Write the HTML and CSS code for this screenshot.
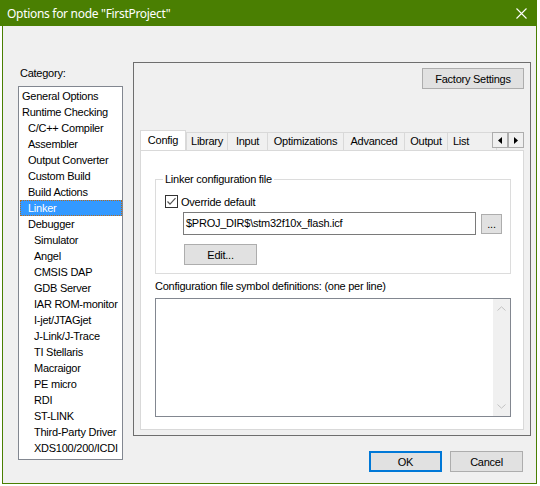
FILE: index.html
```html
<!DOCTYPE html>
<html lang="en">
<head>
    <meta charset="UTF-8">
    <title>Options for node "FirstProject"</title>
    <link rel="stylesheet" href="styles.css">
</head>
<body>

    <div class="window">
        <!-- Title bar -->
        <div class="titlebar">
            <span class="title">Options for node "FirstProject"</span>
            <svg class="close" width="11" height="11" viewBox="0 0 11 11">
                <path d="M0.5 0.5 L10.5 10.5 M10.5 0.5 L0.5 10.5" stroke="#fff" stroke-width="1.1" fill="none"/>
            </svg>
        </div>

        <div class="client">
            <!-- Category column -->
            <div class="category">
                <div class="category-label">Category:</div>
                <ul class="category-list">
                    <li class="lvl0">General Options</li>
                    <li class="lvl0">Runtime Checking</li>
                    <li class="lvl1">C/C++ Compiler</li>
                    <li class="lvl1">Assembler</li>
                    <li class="lvl1">Output Converter</li>
                    <li class="lvl1">Custom Build</li>
                    <li class="lvl1">Build Actions</li>
                    <li class="lvl1 selected">Linker</li>
                    <li class="lvl1">Debugger</li>
                    <li class="lvl2">Simulator</li>
                    <li class="lvl2">Angel</li>
                    <li class="lvl2">CMSIS DAP</li>
                    <li class="lvl2">GDB Server</li>
                    <li class="lvl2">IAR ROM-monitor</li>
                    <li class="lvl2">I-jet/JTAGjet</li>
                    <li class="lvl2">J-Link/J-Trace</li>
                    <li class="lvl2">TI Stellaris</li>
                    <li class="lvl2">Macraigor</li>
                    <li class="lvl2">PE micro</li>
                    <li class="lvl2">RDI</li>
                    <li class="lvl2">ST-LINK</li>
                    <li class="lvl2">Third-Party Driver</li>
                    <li class="lvl2">XDS100/200/ICDI</li>
                </ul>
            </div>

            <!-- Options column -->
            <div class="main">
                <div class="options-frame">
                    <div class="frame-top">
                        <button class="btn factory">Factory Settings</button>
                    </div>

                    <div class="tab-row">
                        <span class="tab active">Config</span>
                        <span class="tab tab-library">Library</span>
                        <span class="tab tab-input">Input</span>
                        <span class="tab tab-opt">Optimizations</span>
                        <span class="tab tab-adv">Advanced</span>
                        <span class="tab tab-output">Output</span>
                        <span class="tab tab-list">List</span>

                        <div class="tab-scroll">
                            <span class="scroll-btn">
                                <svg width="4" height="7" viewBox="0 0 4 7"><path d="M4 0 L0 3.5 L4 7 Z" fill="#000"/></svg>
                            </span>
                            <span class="scroll-btn">
                                <svg width="4" height="7" viewBox="0 0 4 7"><path d="M0 0 L4 3.5 L0 7 Z" fill="#000"/></svg>
                            </span>
                        </div>
                    </div>

                    <div class="tab-page">
                        <fieldset class="group">
                            <legend>Linker configuration file</legend>
                            <div class="check-row">
                                <svg class="checkbox" width="13" height="13" viewBox="0 0 13 13">
                                    <rect x="0.5" y="0.5" width="12" height="12" fill="#fff" stroke="#333"/>
                                    <path d="M2.5 6.5 L5 9.2 L10.5 3.2" stroke="#555" stroke-width="1.2" fill="none"/>
                                </svg>
                                <span>Override default</span>
                            </div>
                            <div class="path-row">
                                <div class="textbox">$PROJ_DIR$\stm32f10x_flash.icf</div>
                                <button class="btn browse">...</button>
                            </div>
                            <button class="btn edit">Edit...</button>
                        </fieldset>

                        <div class="defs-label">Configuration file symbol definitions: (one per line)</div>
                        <div class="defs-box">
                            <div class="vscroll">
                                <svg width="9" height="5" viewBox="0 0 9 5"><path d="M0.5 4.5 L4.5 0.8 L8.5 4.5" stroke="#c2c2c2" fill="none"/></svg>
                                <svg width="9" height="5" viewBox="0 0 9 5"><path d="M0.5 0.5 L4.5 4.2 L8.5 0.5" stroke="#c2c2c2" fill="none"/></svg>
                            </div>
                        </div>
                    </div>
                </div>

                <div class="dialog-buttons">
                    <button class="btn ok">OK</button>
                    <button class="btn">Cancel</button>
                </div>
            </div>
        </div>
    </div>

</body>
</html>
```

FILE: styles.css
```css
/* General Reset */
* {
    margin: 0;
    padding: 0;
    box-sizing: border-box;
}

body {
    width: 540px;
    height: 486px;
    overflow: hidden;
    background: #fff;
    font-family: "Liberation Sans", Arial, sans-serif;
    font-size: 11px;
    letter-spacing: -0.25px;
    color: #000;
}

/* Window */
.window {
    width: 537px;
}

.titlebar {
    height: 26px;
    background-color: #4a7f02;
    display: flex;
    align-items: center;
    justify-content: space-between;
    padding: 0 10px 0 7px;
}

.title {
    font-family: "Segoe UI", "Noto Sans", sans-serif;
    font-size: 12px;
    color: #fff;
    letter-spacing: -0.3px;
}

.close {
    display: block;
    margin-top: 1px;
}

.client {
    margin-left: 2px;
    width: 535px;
    height: 458px;
    background-color: #f0f0f0;
    border: 1px solid #4a7f02;
    border-top: none;
    padding: 36px 5px 0 15px;
    display: grid;
    grid-template-columns: 105px 398px;
    column-gap: 10px;
    align-items: start;
}

/* Category list */
.category-label {
    margin-top: 4px;
    line-height: 14px;
    padding-left: 2px;
}

.category-list {
    list-style: none;
    margin-top: 6px;
    height: 374px;
    background: #fff;
    border: 1px solid #828790;
    padding-top: 1px;
}

.category-list li {
    height: 16px;
    line-height: 16px;
    white-space: nowrap;
}

.lvl0 { padding-left: 3px; }
.lvl1 { padding-left: 9px; }
.lvl2 { padding-left: 15px; }

.category-list li.selected {
    margin-left: 1px;
    padding-left: 8px;
    background-color: #3399ff;
    color: #fff;
    outline: 1px dotted #b86b1a;
    outline-offset: -1px;
}

/* Options frame */
.options-frame {
    height: 374px;
    border: 1px solid #6e6e6e;
    display: flex;
    flex-direction: column;
}

.frame-top {
    display: flex;
    justify-content: flex-end;
    padding: 5px 6px 0 0;
    height: 67px;
}

.btn {
    font-family: "Liberation Sans", Arial, sans-serif;
    font-size: 11px;
    letter-spacing: -0.25px;
    color: #000;
    background-color: #e1e1e1;
    border: 1px solid #adadad;
    height: 21px;
    width: 73px;
    text-align: center;
}

.factory {
    width: 102px;
}

/* Tabs */
.tab-row {
    position: relative;
    height: 20px;
    padding-left: 6px;
    display: flex;
    align-items: flex-end;
    overflow: hidden;
}

.tab {
    height: 18px;
    line-height: 17px;
    border: 1px solid #d9d9d9;
    border-bottom: none;
    background-color: #f0f0f0;
    text-align: center;
    margin-left: -1px;
    flex-shrink: 0;
    white-space: nowrap;
}

.tab.active {
    height: 20px;
    line-height: 18px;
    width: 46px;
    margin-left: 0;
    background-color: #fff;
    position: relative;
    z-index: 1;
}

.tab.active + .tab { margin-left: 0; }

.tab-library { width: 42px; }
.tab-input { width: 41px; }
.tab-opt { width: 77px; }
.tab-adv { width: 62px; }
.tab-output { width: 44px; }
.tab-list { width: 50px; text-align: left; padding-left: 5px; }

.tab-scroll {
    position: absolute;
    right: 6px;
    top: 2px;
    display: flex;
    z-index: 2;
}

.scroll-btn {
    width: 16px;
    height: 16px;
    border: 1px solid #adadad;
    background-color: #f0f0f0;
    display: flex;
    align-items: center;
    justify-content: center;
}

/* Tab page */
.tab-page {
    margin: 0 6px;
    height: 280px;
    background-color: #fff;
    border: 1px solid #d9d9d9;
    padding: 0 12px 0 14px;
}

.group {
    margin-top: 22px;
    border: 1px solid #dcdcdc;
    padding: 0 0 8px 0;
}

.group legend {
    margin-left: 7px;
    padding: 0 2px;
    line-height: 13px;
}

.check-row {
    display: flex;
    align-items: center;
    margin: 9px 0 0 9px;
    height: 13px;
}

.checkbox {
    display: block;
    margin-right: 3px;
}

.path-row {
    display: flex;
    align-items: center;
    margin: 4px 0 0 27px;
}

.textbox {
    width: 293px;
    height: 23px;
    border: 1px solid #7a7a7a;
    background: #fff;
    line-height: 21px;
    padding-left: 2px;
}

.browse {
    width: 21px;
    height: 20px;
    margin-left: 5px;
    line-height: 14px;
}

.edit {
    display: block;
    margin: 9px 0 0 28px;
}

.defs-label {
    margin-top: 6px;
    line-height: 13px;
}

.defs-box {
    margin-top: 5px;
    height: 119px;
    border: 1px solid #828790;
    display: flex;
    justify-content: flex-end;
}

.vscroll {
    width: 17px;
    background-color: #f0f0f0;
    display: flex;
    flex-direction: column;
    justify-content: space-between;
    align-items: center;
    padding: 7px 0 7px;
}

.vscroll svg {
    display: block;
}

/* OK / Cancel */
.dialog-buttons {
    display: flex;
    justify-content: flex-end;
    gap: 8px;
    margin: 15px 8px 0 0;
}

.btn.ok {
    border: 2px solid #0078d7;
}
```
